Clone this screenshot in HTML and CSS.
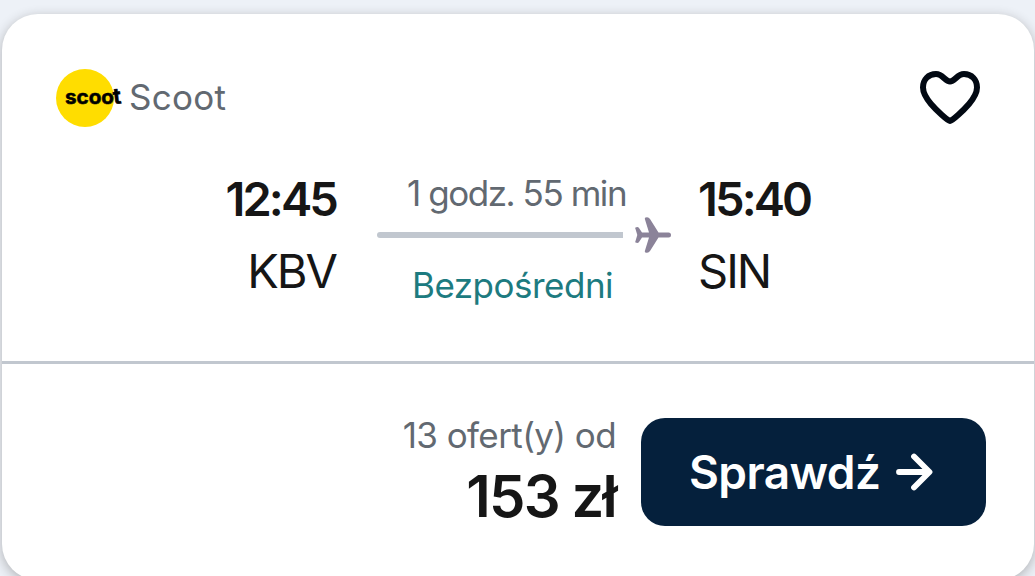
FILE: index.html
```html
<!DOCTYPE html>
<html lang="pl">

<head>
  <meta charset="UTF-8">
  <meta name="viewport" content="width=device-width, initial-scale=1.0">
  <title>KBV - SIN</title>
  <link rel="stylesheet" href="styles.css">
</head>

<body>
  <div class="ticket">
    <div class="header">
      <div class="airline">
        <svg class="logo" width="68" height="60" viewBox="0 0 68 60">
          <circle cx="30" cy="30" r="29" fill="#ffdd00" />
          <text class="logo-text" x="10" y="35.500" textLength="49" lengthAdjust="spacingAndGlyphs">scoo</text>
          <text class="logo-text logo-t" x="58" y="36" transform="rotate(-6 60 30)">t</text>
        </svg>
        <span class="airline-name">Scoot</span>
      </div>
      <svg class="heart" width="60" height="56" viewBox="0 0 60 56">
        <path d="M30 51 C27 50 17 41 11 34 C6 28 3 23 3 17.500 C3 9.500 8.500 4 16 4 C23 4 25 11.500 30 11.500 C35 11.500 37 4 44 4 C51.500 4 57 9.500 57 17.500 C57 23 54 28 49 34 C43 41 33 50 30 51 Z" />
      </svg>
    </div>

    <div class="leg">
      <div class="departure">
        <div class="time">12:45</div>
        <div class="airport">KBV</div>
      </div>
      <div class="route">
        <div class="duration">1 godz. 55 min</div>
        <div class="track">
          <div class="line"></div>
          <svg class="plane" width="36" height="36" viewBox="0 0 36 36">
            <path d="M10.500 0.500 Q13.500 -0.500 15 2 L23.500 15.500 H33.500 Q36 15.500 36 18 Q36 20.500 33.500 20.500 H23.500 L15 34 Q13.500 36.500 10.500 35.500 Q9.500 35 10 33.500 L14 20.500 H7 L4 25 Q3 26.500 0.500 25.500 Q0 25 0.500 24 L2.300 18 L0.500 12 Q0 11 0.500 10.500 Q3 9.500 4 11 L7 15.500 H14 L10 2.500 Q9.500 1 10.500 0.500 Z" />
          </svg>
        </div>
        <div class="stops">Bezpośredni</div>
      </div>
      <div class="arrival">
        <div class="time">15:40</div>
        <div class="airport">SIN</div>
      </div>
    </div>

    <div class="footer">
      <div class="offer">
        <div class="offer-count">13 ofert(y) od</div>
        <div class="price">153 zł</div>
      </div>
      <button class="check" type="button">
        <span>Sprawdź</span>
        <svg class="arrow" width="38" height="38" viewBox="0 0 38 38">
          <path d="M3 19 H33 M18 3.500 L33.500 19 L18 34.500" />
        </svg>
      </button>
    </div>
  </div>
</body>

</html>
```
FILE: styles.css
```css
* {
  box-sizing: border-box;
}

body {
  margin: 0;
  height: 576px;
  overflow: hidden;
  padding: 14px 1px 0 2px;
  background-color: #edf1f7;
  font-family: Inter, "Liberation Sans", sans-serif;
  color: #161616;
}

.ticket {
  height: 566px;
  border-radius: 36px;
  background-color: #fff;
  box-shadow: 0 3px 12px rgba(37, 32, 31, 0.3);
}

/* Airline and favourite icon */
.header {
  display: flex;
  justify-content: space-between;
  align-items: flex-start;
  height: 154px;
  padding: 54px 54px 0 53px;
}

.airline {
  display: flex;
  align-items: center;
  gap: 6px;
}

.logo-text {
  font-size: 20px;
  font-weight: 700;
  stroke: #000;
  stroke-width: 0.5px;
}

.logo-t {
  font-size: 22px;
}

.airline-name {
  height: 60px;
  font-size: 35px;
  line-height: 58px;
  letter-spacing: 0.3px;
  color: #626971;
}

.heart {
  margin-top: 2px;
  fill: none;
  stroke: #020913;
  stroke-width: 6px;
  stroke-linejoin: round;
}

/* Times, airports and the route between them */
.leg {
  display: grid;
  grid-template-columns: 335px 294px 1fr;
  column-gap: 40px;
  height: 193px;
}

.departure {
  padding-right: 1px;
  text-align: right;
}

.arrival {
  margin-left: -13px;
}

.time {
  height: 62px;
  line-height: 62px;
  font-size: 47px;
  font-weight: 600;
  letter-spacing: -2.9px;
}

.airport {
  height: 82px;
  line-height: 82px;
  font-size: 47px;
  letter-spacing: -2px;
}

.duration {
  height: 49px;
  padding-left: 30px;
  line-height: 50px;
  font-size: 35px;
  letter-spacing: -1.45px;
  white-space: nowrap;
  color: #626971;
}

.track {
  display: flex;
  align-items: center;
  justify-content: space-between;
  height: 36px;
}

.line {
  width: 246px;
  height: 6px;
  border-radius: 3px 0 0 3px;
  background-color: #c1c7cf;
}

.plane {
  fill: #8b8399;
}

.stops {
  padding-left: 35px;
  line-height: 65px;
  font-size: 35px;
  letter-spacing: -0.5px;
  color: #1d7b80;
}

/* Price and button */
.footer {
  display: flex;
  justify-content: flex-end;
  gap: 23px;
  padding: 54px 48px 0 0;
  border-top: 3px solid #c1c7cf;
}

.offer {
  padding-right: 2px;
  text-align: right;
}

.offer-count {
  height: 37px;
  line-height: 35px;
  font-size: 35px;
  letter-spacing: -0.6px;
  color: #626971;
}

.price {
  line-height: 82px;
  font-size: 58px;
  font-weight: 600;
  letter-spacing: -1.8px;
}

.check {
  display: flex;
  align-items: center;
  justify-content: space-between;
  width: 345px;
  height: 108px;
  padding: 0 52px 0 48px;
  border: none;
  border-radius: 24px;
  background-color: #05203c;
  color: #fff;
  font-family: inherit;
  font-size: 46px;
  font-weight: 600;
  letter-spacing: -0.6px;
}

.arrow {
  fill: none;
  stroke: #fff;
  stroke-width: 5.8px;
  stroke-linecap: round;
  stroke-linejoin: round;
}
```
